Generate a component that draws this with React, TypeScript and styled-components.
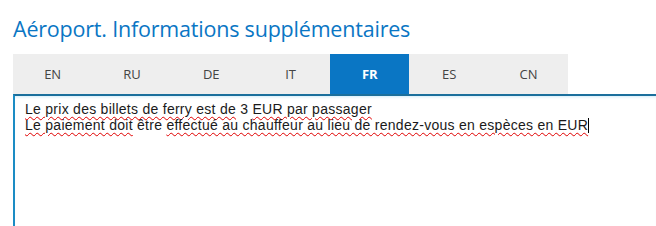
import React, {useState} from "react";
import styled, {createGlobalStyle} from "styled-components";

const GlobalStyle = createGlobalStyle`
  html, body {
    margin: 0;
    padding: 0;
    background: #ffffff;
  }
`

const Page = styled.div`
  width: 656px;
  height: 226px;
  overflow: hidden;
  padding: 14px 0 0 13px;
  box-sizing: border-box;
  display: flex;
  flex-direction: column;
`

const Title = styled.h1`
  margin: 0;
  font-family: "Open Sans", sans-serif;
  font-weight: 400;
  font-size: 21.5px;
  line-height: 30px;
  color: #0a76c4;
  letter-spacing: -0.2px;
`

const Tabs = styled.div`
  display: flex;
  margin-top: 10px;
`

const Tab = styled.button<{active?: boolean}>`
  width: 79.3px;
  height: 40px;
  border: none;
  padding: 0;
  font-family: "Open Sans", sans-serif;
  font-size: 13px;
  font-weight: ${props => props.active ? "700" : "400"};
  color: ${props => props.active ? "#ffffff" : "#444444"};
  background: ${props => props.active ? "#0a76c4" : "#eeeeee"};
  cursor: pointer;
`

const Editor = styled.div`
  flex: 1;
  border-top: 2px solid #1b6f9c;
  border-left: 2px solid #1b8cc4;
  box-shadow: inset 0 3px 3px -2px rgba(120, 200, 240, 0.35);
  padding: 5px 10px;
  font-family: "Liberation Sans", Arial, sans-serif;
  font-size: 14px;
  line-height: 16px;
  letter-spacing: 0.27px;
  color: #1a1a1a;
`

const Line = styled.div`
  white-space: nowrap;
`

const Typo = styled.span`
  text-decoration: underline wavy #e00000;
  text-decoration-thickness: 1.3px;
  text-underline-offset: 2px;
`

const Caret = styled.span`
  display: inline-block;
  width: 1px;
  height: 15px;
  background: #000;
  vertical-align: -3px;
`

const langs = ["EN", "RU", "DE", "IT", "FR", "ES", "CN"]

export default function App() {
    const [active, setActive] = useState("FR")

    return (
        <>
            <GlobalStyle/>
            <Page>
                <Title>Aéroport. Informations supplémentaires</Title>
                <Tabs>
                    {langs.map(l => (
                        <Tab key={l} active={l === active} onClick={() => setActive(l)}>{l}</Tab>
                    ))}
                </Tabs>
                <Editor>
                    <Line><Typo>Le prix des billets de ferry est de</Typo> 3 <Typo>EUR par passager</Typo></Line>
                    <Line><Typo>Le paiement doit</Typo> être <Typo>effectué au chauffeur au lieu de rendez-vous en espèces en EUR</Typo><Caret/></Line>
                </Editor>
            </Page>
        </>
    )
}
